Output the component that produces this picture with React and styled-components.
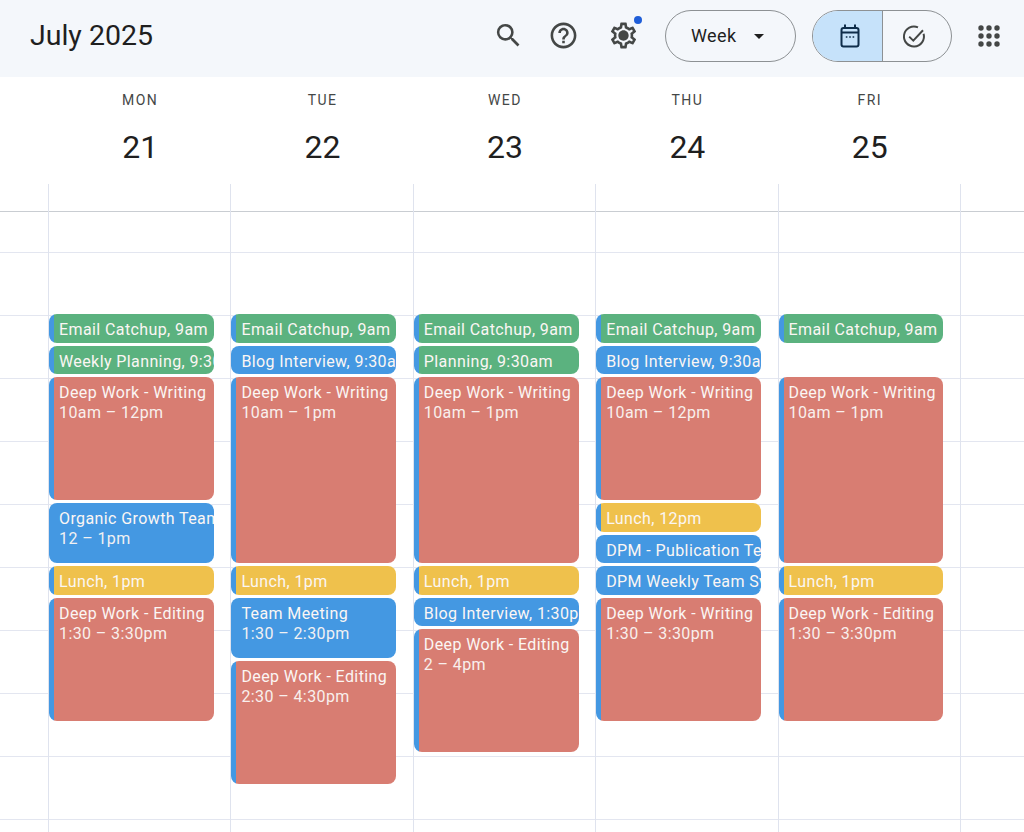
import styled, { createGlobalStyle } from "styled-components";
import { MdSearch, MdOutlineHelpOutline, MdOutlineSettings, MdArrowDropDown } from "react-icons/md";

const GlobalStyle = createGlobalStyle`
  html, body {
    margin: 0;
    background: #fff;
    overflow: hidden;
  }
  body {
    font-family: Roboto, "Liberation Sans", sans-serif;
  }
`;

const COLORS = {
  green: "#5bb27f",
  blue: "#4498e2",
  red: "#d87d72",
  yellow: "#efc14c",
};

const Page = styled.div`
  width: 1024px;
  height: 832px;
  overflow: hidden;
`;

const Toolbar = styled.header`
  height: 77px;
  display: flex;
  align-items: center;
  padding: 0 23px 6px 30px;
  box-sizing: border-box;
  background: #f4f7fb;
`;

const Title = styled.h1`
  margin: 0;
  font-size: 28.5px;
  font-weight: 400;
  color: #1f1f1f;
  margin-right: auto;
`;

const IconButton = styled.button`
  position: relative;
  width: 32px;
  height: 32px;
  padding: 0;
  margin-right: ${(p) => p.$gap}px;
  display: flex;
  align-items: center;
  justify-content: center;
  border: 0;
  background: none;
  color: #444746;
  font-size: 31px;
`;

const GearCore = styled.span`
  position: absolute;
  top: 12px;
  left: 12px;
  width: 8px;
  height: 8px;
  border-radius: 50%;
  background: #444746;
`;

const Badge = styled.span`
  position: absolute;
  top: -4px;
  right: -3px;
  width: 8px;
  height: 8px;
  border-radius: 50%;
  background: #1f5ed8;
`;

const ViewSelect = styled.button`
  width: 131px;
  height: 52px;
  margin-right: 16px;
  padding: 0 0 0 25px;
  display: flex;
  align-items: center;
  gap: 10px;
  box-sizing: border-box;
  border: 1.5px solid #8d9194;
  border-radius: 26px;
  background: none;
  font-family: inherit;
  font-size: 18px;
  letter-spacing: 0.4px;
  color: #1f1f1f;
  svg {
    font-size: 24px;
  }
`;

const Toggle = styled.div`
  width: 140px;
  height: 52px;
  margin-right: 25px;
  display: flex;
  box-sizing: border-box;
  border: 1.5px solid #8d9194;
  border-radius: 26px;
  overflow: hidden;
`;

const ToggleSide = styled.div`
  flex: 1;
  display: flex;
  align-items: center;
  justify-content: center;
  padding: ${(p) => (p.$active ? "0 0 0 5px" : "0 5px 0 0")};
  background: ${(p) => (p.$active ? "#c6e2fa" : "transparent")};
  & + & {
    border-left: 1.5px solid #8d9194;
  }
`;

const Dots = styled.svg`
  width: 24px;
  height: 24px;
  fill: #444746;
`;

const Columns = styled.div`
  display: grid;
  grid-template-columns: 48px repeat(5, 182.4px) 1fr;
`;

const DayHeadRow = styled(Columns)`
  height: 107px;
`;

const DayHead = styled.div`
  grid-column: ${(p) => p.$col};
  display: flex;
  flex-direction: column;
  align-items: center;
  padding: 16px 0 0 2px;
`;

const DayName = styled.div`
  font-size: 14px;
  line-height: 15px;
  letter-spacing: 1.5px;
  color: #444746;
`;

const DayNum = styled.div`
  margin-top: 19px;
  font-size: 32px;
  line-height: 40px;
  color: #1f1f1f;
`;

const AllDayRow = styled(Columns)`
  height: 28px;
  box-sizing: border-box;
  border-bottom: 1px solid #c9cdd2;
`;

const GridBody = styled(Columns)`
  height: 620px;
  background-image: linear-gradient(#e3e6f0 1px, transparent 1px);
  background-size: 100% 63px;
  background-position: 0 40px;
`;

const DayColumn = styled.div`
  grid-column: ${(p) => p.$col};
  border-left: 1px solid #dfe3ee;
  display: grid;
  grid-template-rows: 102px repeat(18, 31.5px);
  align-content: start;
`;

const Event = styled.div`
  grid-row: ${(p) => p.$slot + 2} / span ${(p) => p.$span};
  margin: 0 16.5px 3px 0;
  padding: 6px 0 0 10px;
  overflow: hidden;
  box-sizing: border-box;
  border-radius: 8px;
  background: linear-gradient(90deg, ${COLORS.blue} 5px, ${(p) => COLORS[p.$color]} 5px);
  color: #fbf6f4;
  font-size: 16px;
  line-height: 20px;
  letter-spacing: 0.4px;
  white-space: nowrap;
`;

const EventTime = styled.div`
  opacity: 0.95;
`;

const days = [
  {
    name: "MON",
    num: 21,
    events: [
      { title: "Email Catchup, 9am", color: "green", slot: 0, span: 1 },
      { title: "Weekly Planning, 9:30am", color: "green", slot: 1, span: 1 },
      { title: "Deep Work - Writing", time: "10am – 12pm", color: "red", slot: 2, span: 4 },
      { title: "Organic Growth Team", time: "12 – 1pm", color: "blue", slot: 6, span: 2 },
      { title: "Lunch, 1pm", color: "yellow", slot: 8, span: 1 },
      { title: "Deep Work - Editing", time: "1:30 – 3:30pm", color: "red", slot: 9, span: 4 },
    ],
  },
  {
    name: "TUE",
    num: 22,
    events: [
      { title: "Email Catchup, 9am", color: "green", slot: 0, span: 1 },
      { title: "Blog Interview, 9:30am", color: "blue", slot: 1, span: 1 },
      { title: "Deep Work - Writing", time: "10am – 1pm", color: "red", slot: 2, span: 6 },
      { title: "Lunch, 1pm", color: "yellow", slot: 8, span: 1 },
      { title: "Team Meeting", time: "1:30 – 2:30pm", color: "blue", slot: 9, span: 2 },
      { title: "Deep Work - Editing", time: "2:30 – 4:30pm", color: "red", slot: 11, span: 4 },
    ],
  },
  {
    name: "WED",
    num: 23,
    events: [
      { title: "Email Catchup, 9am", color: "green", slot: 0, span: 1 },
      { title: "Planning, 9:30am", color: "green", slot: 1, span: 1 },
      { title: "Deep Work - Writing", time: "10am – 1pm", color: "red", slot: 2, span: 6 },
      { title: "Lunch, 1pm", color: "yellow", slot: 8, span: 1 },
      { title: "Blog Interview, 1:30pm", color: "blue", slot: 9, span: 1 },
      { title: "Deep Work - Editing", time: "2 – 4pm", color: "red", slot: 10, span: 4 },
    ],
  },
  {
    name: "THU",
    num: 24,
    events: [
      { title: "Email Catchup, 9am", color: "green", slot: 0, span: 1 },
      { title: "Blog Interview, 9:30am", color: "blue", slot: 1, span: 1 },
      { title: "Deep Work - Writing", time: "10am – 12pm", color: "red", slot: 2, span: 4 },
      { title: "Lunch, 12pm", color: "yellow", slot: 6, span: 1 },
      { title: "DPM - Publication Team", color: "blue", slot: 7, span: 1 },
      { title: "DPM Weekly Team Sync", color: "blue", slot: 8, span: 1 },
      { title: "Deep Work - Writing", time: "1:30 – 3:30pm", color: "red", slot: 9, span: 4 },
    ],
  },
  {
    name: "FRI",
    num: 25,
    events: [
      { title: "Email Catchup, 9am", color: "green", slot: 0, span: 1 },
      { title: "Deep Work - Writing", time: "10am – 1pm", color: "red", slot: 2, span: 6 },
      { title: "Lunch, 1pm", color: "yellow", slot: 8, span: 1 },
      { title: "Deep Work - Editing", time: "1:30 – 3:30pm", color: "red", slot: 9, span: 4 },
    ],
  },
];

const CalendarIcon = () => (
  <svg width="24" height="24" viewBox="0 0 24 24" fill="none" stroke="#0f2d4a" strokeWidth="2">
    <rect x="3.5" y="4" width="17" height="18.5" rx="2" />
    <path d="M3.5 8.6h17M7 0.5V4M17 0.5V4" />
    <path d="M7.8 13h1.6M11.2 13h1.6M14.6 13h1.6" strokeWidth="1.4" />
  </svg>
);

const TaskIcon = () => (
  <svg width="24" height="24" viewBox="0 0 24 24" fill="none" stroke="#444746" strokeWidth="2">
    <path d="M21.6 9.8A10 10 0 1 1 16 3.3" />
    <path d="M7.2 12.6l4.1 4L21 6.2" />
  </svg>
);

const GridDots = () => (
  <Dots viewBox="0 0 24 24">
    {[4, 12, 20].map((y) =>
      [4, 12, 20].map((x) => <circle key={`${x}-${y}`} cx={x} cy={y} r="2.7" />)
    )}
  </Dots>
);

const App = () => {
  return (
    <Page>
      <GlobalStyle />
      <Toolbar>
        <Title>July 2025</Title>
        <IconButton $gap={23}>
          <MdSearch />
        </IconButton>
        <IconButton $gap={28}>
          <MdOutlineHelpOutline />
        </IconButton>
        <IconButton $gap={26}>
          <MdOutlineSettings />
          <GearCore />
          <Badge />
        </IconButton>
        <ViewSelect>
          Week
          <MdArrowDropDown />
        </ViewSelect>
        <Toggle>
          <ToggleSide $active>
            <CalendarIcon />
          </ToggleSide>
          <ToggleSide>
            <TaskIcon />
          </ToggleSide>
        </Toggle>
        <GridDots />
      </Toolbar>
      <DayHeadRow>
        {days.map((day, i) => (
          <DayHead key={day.name} $col={i + 2}>
            <DayName>{day.name}</DayName>
            <DayNum>{day.num}</DayNum>
          </DayHead>
        ))}
      </DayHeadRow>
      <AllDayRow>
        {[2, 3, 4, 5, 6, 7].map((col) => (
          <DayColumn key={col} $col={col} />
        ))}
      </AllDayRow>
      <GridBody>
        {days.map((day, i) => (
          <DayColumn key={day.name} $col={i + 2}>
            {day.events.map((ev) => (
              <Event key={ev.slot} $color={ev.color} $slot={ev.slot} $span={ev.span}>
                {ev.title}
                {ev.time && <EventTime>{ev.time}</EventTime>}
              </Event>
            ))}
          </DayColumn>
        ))}
        <DayColumn $col={7} />
      </GridBody>
    </Page>
  );
};

export default App;
